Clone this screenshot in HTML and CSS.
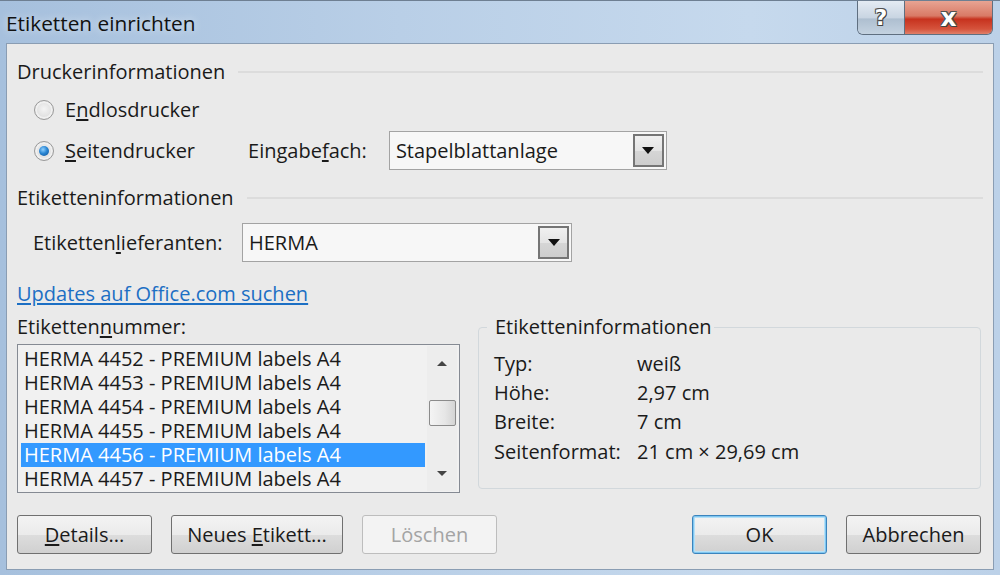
FILE: index.html
```html
<!DOCTYPE html>
<html lang="de">
<head>
<meta charset="utf-8">
<title>Etiketten einrichten</title>
<link rel="stylesheet" href="styles.css">
</head>
<body>
<div class="window">
  <div class="titlebar">
    <div class="title">Etiketten einrichten</div>
    <div class="caption">
      <div class="cap-help">?</div>
      <div class="cap-close">x</div>
    </div>
  </div>
  <div class="client">
    <div class="heading heading-1"><span>Druckerinformationen</span><i class="rule"></i></div>
    <div class="radio-row row-1">
      <span class="radio"></span><span class="label">E<u>n</u>dlosdrucker</span>
    </div>
    <div class="radio-row row-2">
      <span class="radio checked"></span><span class="label"><u>S</u>eitendrucker</span>
      <span class="field-label tray-label">Eingabe<u>f</u>ach:</span>
      <div class="combo tray-combo"><span class="combo-text">Stapelblattanlage</span><span class="combo-btn"><i class="tri"></i></span></div>
    </div>
    <div class="heading heading-2"><span>Etiketteninformationen</span><i class="rule"></i></div>
    <div class="supplier-row">
      <span class="field-label">Etiketten<u>l</u>ieferanten:</span>
      <div class="combo supplier-combo"><span class="combo-text">HERMA</span><span class="combo-btn"><i class="tri"></i></span></div>
    </div>
    <a class="link" href="#">Updates auf Office.com suchen</a>
    <div class="columns">
      <div class="left-col">
        <div class="list-label">Etiketten<u>n</u>ummer:</div>
        <div class="listbox">
          <ul class="items">
            <li>HERMA 4452 - PREMIUM labels A4</li>
            <li>HERMA 4453 - PREMIUM labels A4</li>
            <li>HERMA 4454 - PREMIUM labels A4</li>
            <li>HERMA 4455 - PREMIUM labels A4</li>
            <li class="selected">HERMA 4456 - PREMIUM labels A4</li>
            <li>HERMA 4457 - PREMIUM labels A4</li>
          </ul>
          <div class="scrollbar">
            <i class="sb-up"></i>
            <i class="sb-thumb"></i>
            <i class="sb-down"></i>
          </div>
        </div>
      </div>
      <fieldset class="info">
        <legend>Etiketteninformationen</legend>
        <div class="info-grid">
          <span>Typ:</span><span>weiß</span>
          <span>Höhe:</span><span>2,97 cm</span>
          <span>Breite:</span><span>7 cm</span>
          <span>Seitenformat:</span><span>21 cm × 29,69 cm</span>
        </div>
      </fieldset>
    </div>
    <div class="buttons">
      <button class="btn btn-details"><u>D</u>etails...</button>
      <button class="btn btn-new">Neues <u>E</u>tikett...</button>
      <button class="btn btn-del" disabled>Löschen</button>
      <span class="spacer"></span>
      <button class="btn btn-ok">OK</button>
      <button class="btn btn-cancel">Abbrechen</button>
    </div>
  </div>
</div>
</body>
</html>
```
FILE: styles.css
```css
* { box-sizing: border-box; }
html, body { margin: 0; padding: 0; }
body {
  width: 1000px;
  height: 575px;
  overflow: hidden;
  font-family: "Open Sans", "Noto Sans", "Liberation Sans", sans-serif;
  font-size: 20px;
  color: #1a1a1a;
}
u { text-decoration: underline; text-underline-offset: 2px; }

.window {
  width: 1000px;
  height: 575px;
  display: flex;
  flex-direction: column;
  background: linear-gradient(to right, #a6c0dd 0%, #b9cfe7 40%, #c6d9ed 75%, #bcd1e8 100%);
  border-top: 1px solid #6e7f92;
}

.titlebar {
  height: 42px;
  display: flex;
  align-items: flex-start;
  position: relative;
}
.title {
  padding: 6px 0 0 6px;
  font-size: 20.8px;
  line-height: 32px;
  color: #111;
  text-shadow: 0 0 8px rgba(255,255,255,0.7);
}
.caption {
  margin-left: auto;
  margin-right: 7px;
  display: flex;
  height: 34px;
  border: 1px solid #5f6f80;
  border-top: none;
  border-radius: 0 0 6px 6px;
  overflow: hidden;
}
.cap-help, .cap-close {
  display: flex;
  align-items: center;
  justify-content: center;
  font-family: "DejaVu Sans", sans-serif;
  font-weight: bold;
  color: #fff;
  text-shadow: 0 0 1px #333, 1px 1px 0 #444, -1px -1px 0 #555, 1px -1px 0 #555, -1px 1px 0 #555;
  line-height: 1;
}
.cap-help {
  width: 47px;
  font-size: 22px;
  background: linear-gradient(to bottom, #e4ebf3 0%, #c9d5e2 50%, #aebfd0 55%, #c4d2e0 100%);
  border-right: 1px solid #5f6f80;
}
.cap-close {
  width: 87px;
  font-size: 25px;
  background: linear-gradient(to bottom, #e8a493 0%, #d97a66 45%, #c7321e 55%, #d5533c 85%, #e0806a 100%);
}

.client {
  flex: 1;
  margin: 0 6px 5px 6px;
  border: 1px solid #8a9db3;
  background: #eaeaea;
  padding: 0 10px 0 10px;
  display: flex;
  flex-direction: column;
  line-height: 24px;
}

.heading {
  display: flex;
  align-items: center;
  height: 24px;
}
.heading span { white-space: nowrap; }
.heading .rule {
  flex: 1;
  height: 2px;
  background: #dcdcdc;
  margin-left: 13px;
}
.heading-1 { margin-top: 16px; }
.heading-2 { margin-top: 16px; }

.radio-row {
  display: flex;
  align-items: center;
  padding-left: 17px;
}
.row-1 { margin-top: 14px; height: 24px; }
.row-2 { margin-top: 9px; height: 39px; }
.radio {
  width: 20px;
  height: 20px;
  border-radius: 50%;
  border: 1px solid #9a9a9a;
  background: radial-gradient(circle at 50% 45%, #f4f4f4 0%, #e2e2e2 55%, #d0d0d0 100%);
  box-shadow: inset 0 0 0 2px #f0f0f0;
  position: relative;
  margin-right: 11px;
  flex: none;
}
.radio.checked::after {
  content: "";
  position: absolute;
  left: 4px; top: 4px;
  width: 10px; height: 10px;
  border-radius: 50%;
  background: radial-gradient(circle at 40% 35%, #8fd0ff 0%, #2a86d3 45%, #0d4f94 100%);
}
.label { white-space: nowrap; }
.tray-label { margin-left: 53px; margin-right: 22px; }

.field-label { white-space: nowrap; }

.combo {
  display: flex;
  align-items: center;
  height: 39px;
  border: 1px solid #a3a3a3;
  background: #f7f7f7;
  padding: 2px;
  flex: none;
}
.combo-text { flex: 1; padding-left: 4px; white-space: nowrap; }
.combo-btn {
  width: 31px;
  height: 100%;
  border: 2px solid #757575;
  background: linear-gradient(to bottom, #f0f0f0 0%, #e4e4e4 50%, #d6d6d6 51%, #cdcdcd 100%);
  display: flex;
  align-items: center;
  justify-content: center;
}
.tri {
  width: 0; height: 0;
  border-left: 6px solid transparent;
  border-right: 6px solid transparent;
  border-top: 7px solid #111;
}
.tray-combo { width: 278px; }

.supplier-row {
  display: flex;
  align-items: center;
  height: 39px;
  margin-top: 13px;
  padding-left: 16px;
}
.supplier-row .field-label { width: 209px; }
.supplier-combo { width: 330px; }

.link {
  align-self: flex-start;
  margin-top: 20px;
  color: #1c6fc4;
  text-decoration: underline;
  text-underline-offset: 2px;
  line-height: 24px;
}

.columns {
  display: flex;
  margin-top: 9px;
  margin-right: 2px;
  gap: 18px;
}
.left-col { width: 443px; flex: none; }
.list-label { height: 24px; }
.listbox {
  margin-top: 5px;
  height: 149px;
  border: 1px solid #858a93;
  background: #f1f1f1;
  display: flex;
}
.items {
  list-style: none;
  margin: 0;
  padding: 2px 2px 0 3px;
  flex: 1;
}
.items li {
  height: 24px;
  line-height: 24px;
  padding-left: 3px;
  white-space: nowrap;
}
.items li.selected {
  background: #3399ff;
  color: #fff;
}
.scrollbar {
  width: 30px;
  margin: 1px 2px 1px 0;
  background: #ededed;
  position: relative;
  display: flex;
  flex-direction: column;
  align-items: center;
}
.sb-up, .sb-down {
  width: 0; height: 0;
  border-left: 5px solid transparent;
  border-right: 5px solid transparent;
}
.sb-up { border-bottom: 5px solid #444; margin-top: 15px; }
.sb-down { border-top: 5px solid #444; margin-top: auto; margin-bottom: 15px; }
.sb-thumb {
  width: 27px;
  height: 26px;
  margin-top: 34px;
  border: 1px solid #8b8b8b;
  border-radius: 2px;
  background: linear-gradient(to right, #f4f4f4 0%, #e6e6e6 60%, #d4d4d4 100%);
}

.info {
  flex: 1;
  margin: 0;
  padding: 0 0 0 15px;
  height: 174px;
  border: 1px solid #d2d8dc;
  border-radius: 4px;
  min-width: 0;
}
.info legend {
  padding: 0 2px 0 8px;
  margin-left: -7px;
  line-height: 24px;
}
.info-grid {
  display: grid;
  grid-template-columns: 143px auto;
  grid-auto-rows: 29.3px;
  align-items: center;
  margin-top: 10px;
}

.buttons {
  display: flex;
  margin-top: 22px;
  margin-right: 2px;
  gap: 19px;
}
.spacer { flex: 1; }
.btn {
  font: inherit;
  width: 135px;
  height: 39px;
  padding: 0;
  border: 1px solid #707070;
  border-radius: 3px;
  background: linear-gradient(to bottom, #f3f3f3 0%, #ebebeb 50%, #dddddd 51%, #d0d0d0 100%);
  color: #1a1a1a;
  line-height: 24px;
  flex: none;
}
.btn-new { width: 172px; }
.btn-del {
  border-color: #bdbdbd;
  background: #f3f3f3;
  color: #a4a4a4;
}
.btn-ok {
  border-color: #3b84bd;
  box-shadow: inset 0 0 0 1px #7fc6f0, inset 0 0 0 2px #b6e0f7;
}
```
